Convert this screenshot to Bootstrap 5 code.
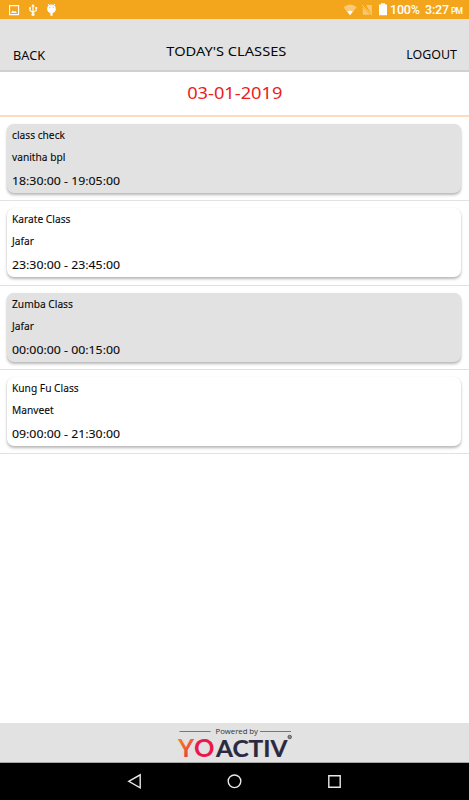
<!DOCTYPE html>
<html lang="en">
<head>
<meta charset="utf-8">
<meta name="viewport" content="width=device-width, initial-scale=1">
<title>Today's Classes</title>
<link href="https://cdn.jsdelivr.net/npm/bootstrap@5.3.0/dist/css/bootstrap.min.css" rel="stylesheet">
<style>
body{font-family:"Noto Sans","Open Sans",sans-serif;color:#080808;background:#fff;height:800px;overflow:hidden}
.status-bar{height:19px;background:#f3a61b;color:#fff;font:500 12px/19px Roboto,sans-serif;padding-left:9px;padding-right:6px}
.app-head{height:53px;background:#e2e2e2;border-bottom:2px solid #d0d0d0;font-size:12px;line-height:16px;display:grid;grid-template-columns:130px 166px 1fr;padding:0 12px 0 13px}
.app-head span{display:inline-block}
.head-back{padding-top:29px}
.head-back span{transform:scaleX(1.06);transform-origin:left}
.head-title{padding-top:24px;font-size:13px;text-align:center}
.head-title span{transform:scaleX(1.125)}
.head-out{padding-top:28px}
.head-out span{transform:scaleX(1.035);transform-origin:right}
.date-row{height:45px;border-bottom:2px solid #fbdcbc;color:#ec2020;font-size:16px;line-height:42px}
.date-row span{display:inline-block;transform:scaleX(1.14)}
.class-row{height:84.3px;padding:7px 8px 0 7px;border-bottom:1px solid #e2e2e2}
.class-card{height:69px;border:0;border-radius:7px;box-shadow:0 2px 3px rgba(0,0,0,.28),0 0 1px rgba(0,0,0,.1);padding:0 5px;color:#080808}
.class-card.shade{background:#e2e2e2}
.class-name,.coach{font-size:10px;line-height:22px;height:22px;-webkit-text-stroke:.1px;transform:scaleX(1.02);transform-origin:left}
.hours{font-size:11.5px;line-height:25px;-webkit-text-stroke:.1px;transform:scaleX(1.07);transform-origin:left}
.brand-bar{height:40px;background:#e2e2e2;border-bottom:1px solid #a8a8a8}
.nav-keys{height:37px;background:#000}
</style>
<script src="https://cdn.jsdelivr.net/npm/bootstrap@5.3.0/dist/js/bootstrap.bundle.min.js"></script>
</head>
<body class="d-flex flex-column">
<div class="status-bar d-flex justify-content-between flex-shrink-0">
<svg width="50" height="19" viewBox="9 0 50 19">
<path d="M9.600 5.600h9v9h-9z" fill="none" stroke="#fff" stroke-width="1.100"/><path d="M11 13l1.700-2.600 1.500 1.400 1-.9 1.800 2.100z" fill="#fff"/>
<path d="M33 5v9M30 8v2.500l3 2M36.200 7.500v3l-3.200 2" fill="none" stroke="#fff" stroke-width="1.200"/><path d="M31.200 6.600L33 4l1.800 2.600z" fill="#fff"/><circle cx="33" cy="14.400" r="1.600" fill="#fff"/><circle cx="30" cy="8" r="1" fill="#fff"/><path d="M35.200 7h2v2h-2z" fill="#fff"/>
<path d="M48 4l1.300 1.500M55 4l-1.300 1.500" stroke="#fff"/><path d="M47.200 9q0-4.500 4.300-4.500T55.800 9q0 3.300-3.200 3.900v2.800h-2.200v-2.800q-3.200-.6-3.200-3.900z" fill="#fff"/><path d="M49.300 7.300h1M52.700 7.300h1" stroke="#f3a61b"/>
</svg>
<div class="d-flex">
<svg width="47" height="19" viewBox="342 0 47 19">
<path d="M343.500 7.200q6.800-5.200 13.200 0L350 15.400z" fill="#fff" opacity=".4"/><path d="M347.200 11.600q2.800-1.700 5.600 0L350 15z" fill="#fff"/>
<path d="M366 5h5.800v9.700zM362.800 7.300l7.300 7.400h-7.300z" fill="#fff" opacity=".38"/><path d="M362 5l10 10.300" stroke="#fff" opacity=".45"/>
<path d="M379 4.500h2V3.300h4v1.200h2v10.700h-8z" fill="#fff"/>
</svg>
<svg width="74" height="19" viewBox="389 0 74 19" fill="#fff"><text x="390" y="14" font-weight="500" font-size="12.500" textLength="30">100%</text><text x="425" y="14" font-weight="500" font-size="12.500" textLength="24">3:27</text><text x="451" y="14" font-weight="500" font-size="8.500" textLength="12">PM</text></svg>
</div>
</div>
<header class="app-head flex-shrink-0">
<div class="head-back"><span>BACK</span></div><div class="head-title"><span>TODAY'S CLASSES</span></div><div class="head-out text-end"><span>LOGOUT</span></div>
</header>
<div class="date-row text-center flex-shrink-0"><span>03-01-2019</span></div>
<main class="flex-grow-1">
<div class="class-row"><div class="card class-card align-items-start shade"><div class="class-name">class check</div><div class="coach">vanitha bpl</div><div class="hours">18:30:00 - 19:05:00</div></div></div>
<div class="class-row"><div class="card class-card align-items-start"><div class="class-name">Karate Class</div><div class="coach">Jafar</div><div class="hours">23:30:00 - 23:45:00</div></div></div>
<div class="class-row"><div class="card class-card align-items-start shade"><div class="class-name">Zumba Class</div><div class="coach">Jafar</div><div class="hours">00:00:00 - 00:15:00</div></div></div>
<div class="class-row"><div class="card class-card align-items-start"><div class="class-name">Kung Fu Class</div><div class="coach">Manveet</div><div class="hours">09:00:00 - 21:30:00</div></div></div>
</main>
<footer class="flex-shrink-0">
<div class="brand-bar">
<svg class="d-block mx-auto" width="117" height="39" viewBox="176 724 117 39" font-family="Lato, sans-serif">
<defs><linearGradient id="warm" gradientUnits="userSpaceOnUse" x1="179" y1="740" x2="197" y2="757"><stop stop-color="#f58220"/><stop offset="1" stop-color="#ec2450"/></linearGradient></defs>
<path d="M179.500 732.500h31M260 732.500h31" stroke="#777" stroke-width="1"/>
<text x="215.500" y="735" font-family="Open Sans, sans-serif" font-size="7.800" fill="#333" textLength="42.500">Powered by</text>
<g font-weight="700" font-size="24.500"><text x="178" y="758" fill="url(#warm)" textLength="16" lengthAdjust="spacingAndGlyphs">Y</text><text x="194" y="758" fill="#ec174d" textLength="20.500" lengthAdjust="spacingAndGlyphs">O</text></g>
<text x="216" y="758" font-weight="700" font-size="22.500" fill="#2b2940" stroke="#2b2940" stroke-width=".2" textLength="71.500" lengthAdjust="spacingAndGlyphs">ACTIV</text>
<circle cx="289.700" cy="738" r="1.800" fill="#888" stroke="#444" stroke-width=".7"/>
</svg>
</div>
<div class="nav-keys"><svg class="d-block" width="469" height="37" viewBox="0 763 469 37" fill="none" stroke="#e8e8e8" stroke-width="1.400"><path d="M128.700 781.300l11.500-6.500v13z"/><circle cx="234.500" cy="781.300" r="6.300"/><path d="M328.800 775.800h11.400v11.400h-11.400z"/></svg></div>
</footer>
</body>
</html>
